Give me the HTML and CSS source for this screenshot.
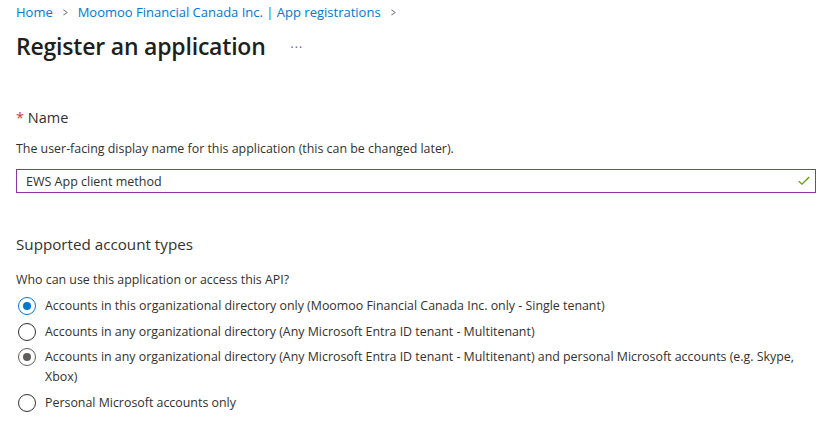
FILE: index.html
```html
<!DOCTYPE html>
<html lang="en">
<head>
<meta charset="utf-8">
<title>Register an application</title>
<link rel="stylesheet" href="styles.css">
</head>
<body>
<div class="page">
  <nav class="crumbs">
    <a class="crumb">Home</a>
    <span class="sep">&gt;</span>
    <a class="crumb">Moomoo Financial Canada Inc. | App registrations</a>
    <span class="sep">&gt;</span>
  </nav>
  <div class="title-row">
    <h1 class="title">Register an application</h1>
    <span class="more">···</span>
  </div>

  <section class="field">
    <div class="label"><span class="req">*</span> Name</div>
    <p class="desc">The user-facing display name for this application (this can be changed later).</p>
    <div class="input">
      <span class="value">EWS App client method</span>
      <svg class="check" width="12" height="10" viewBox="0 0 12 10"><path d="M0.8 5.2 L4 8.2 L11.2 1" fill="none" stroke="#57a300" stroke-width="1.3"/></svg>
    </div>
  </section>

  <section class="accounts">
    <h2 class="sub">Supported account types</h2>
    <p class="question">Who can use this application or access this API?</p>
    <div class="options">
      <label class="opt"><span class="radio on"></span><span class="txt">Accounts in this organizational directory only (Moomoo Financial Canada Inc. only - Single tenant)</span></label>
      <label class="opt"><span class="radio"></span><span class="txt">Accounts in any organizational directory (Any Microsoft Entra ID tenant - Multitenant)</span></label>
      <label class="opt"><span class="radio dim"></span><span class="txt">Accounts in any organizational directory (Any Microsoft Entra ID tenant - Multitenant) and personal Microsoft accounts (e.g. Skype, Xbox)</span></label>
      <label class="opt"><span class="radio"></span><span class="txt">Personal Microsoft accounts only</span></label>
    </div>
  </section>
</div>
</body>
</html>
```

FILE: styles.css
```css
* { box-sizing: border-box; }
html, body { margin: 0; padding: 0; background: #fff; }
body {
  font-family: "Open Sans", "Noto Sans", sans-serif;
  color: #323130;
}
.page { padding: 3px 16px 0 16px; width: 831px; }
.crumbs { display: flex; align-items: center; font-size: 13px; height: 18px; gap: 0; }
.crumb { color: #0078d4; }
.sep { color: #605e5c; margin: 0 9px; font-size: 12px; transform: scaleX(0.7); display: inline-block; }
.title-row { display: flex; align-items: center; margin-top: 9px; height: 32px; }
.title { font-size: 23px; font-weight: 600; margin: 0; color: #201f1e; letter-spacing: -0.2px; }
.more { margin-left: 25px; color: #605e5c; font-size: 12px; letter-spacing: 1px; margin-top: 2px; }
.field { margin-top: 46px; }
.label { font-size: 14.5px; height: 20px; line-height: 20px; }
.req { color: #d13438; }
.desc { font-size: 12.4px; margin: 12px 0 0 0; line-height: 17px; }
.input {
  margin-top: 12px; width: 800px; height: 24px;
  border: 1px solid #8a35a8; display: flex; align-items: center; justify-content: space-between;
  padding: 0 5px 0 9px; font-size: 12.5px;
}
.check { display: block; }
.accounts { margin-top: 41px; }
.sub { font-size: 15.2px; font-weight: 400; margin: 0; line-height: 20px; }
.question { font-size: 12.4px; margin: 17px 0 0 0; line-height: 17px; }
.options { margin-top: 8px; display: flex; flex-direction: column; gap: 5.5px; }
.opt { display: flex; align-items: flex-start; font-size: 12.4px; line-height: 20px; }
.radio {
  width: 18px; height: 18px; border-radius: 50%; border: 1px solid #323130;
  flex: none; margin: 1px 9px 0 2px; position: relative;
}
.radio.on { border-color: #0078d4; }
.radio.on::after, .radio.dim::after {
  content: ""; position: absolute; left: 4px; top: 4px; width: 8px; height: 8px; border-radius: 50%; background: #0078d4;
}
.radio.dim { border-color: #605e5c; }
.radio.dim::after { background: #605e5c; }
.txt { max-width: 780px; }
```
